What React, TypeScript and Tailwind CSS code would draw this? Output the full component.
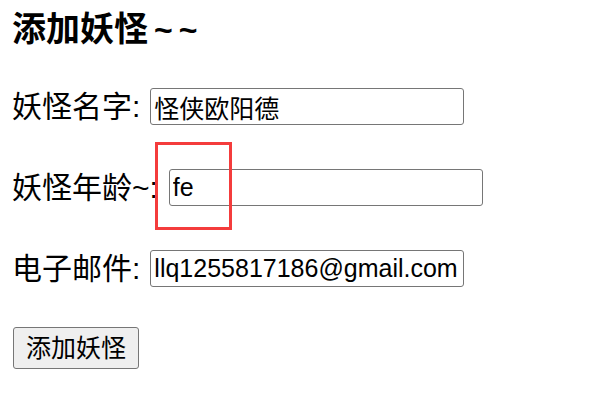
export default function App() {
  const label = 'text-[30px] leading-[37px] text-black';
  const input =
    'h-[37px] w-[314px] rounded-[3px] border border-[#767676] bg-white px-[3px] text-[25px] leading-[35px] text-black outline-none';

  return (
    <div
      className="relative h-[406px] w-[610px] bg-white pl-3"
      style={{ fontFamily: '"Liberation Sans", "Noto Sans CJK SC", sans-serif' }}
    >
      <h3 className="pt-[10px] text-[34px] font-bold leading-[38px] text-black">
        添加妖怪<span className="ml-[6px] text-[32px] tracking-[6px]">~~</span>
      </h3>

      <div className="mt-[39px] flex items-center gap-[10px]">
        <span className={label}>妖怪名字:</span>
        <input className={input} defaultValue="怪侠欧阳德" />
      </div>

      <div className="mt-[44px] flex items-center gap-[11px]">
        <span className={label}>妖怪年龄~:</span>
        <input className={input} defaultValue="fe" />
      </div>

      <div className="mt-[44px] flex items-center gap-[10px]">
        <span className={label}>电子邮件:</span>
        <input className={input} defaultValue="llq1255817186@gmail.com" />
      </div>

      <button
        type="button"
        className="mt-[40px] ml-px h-[42px] w-[126px] rounded-[3px] border border-[#767676] bg-[#efefef] text-[25px] leading-[40px] text-black"
      >
        添加妖怪
      </button>

      {/* annotation box */}
      <div className="absolute left-[155px] top-[142px] h-[88px] w-[77px] border-[3px] border-[#f43c3c]" />
    </div>
  );
}
